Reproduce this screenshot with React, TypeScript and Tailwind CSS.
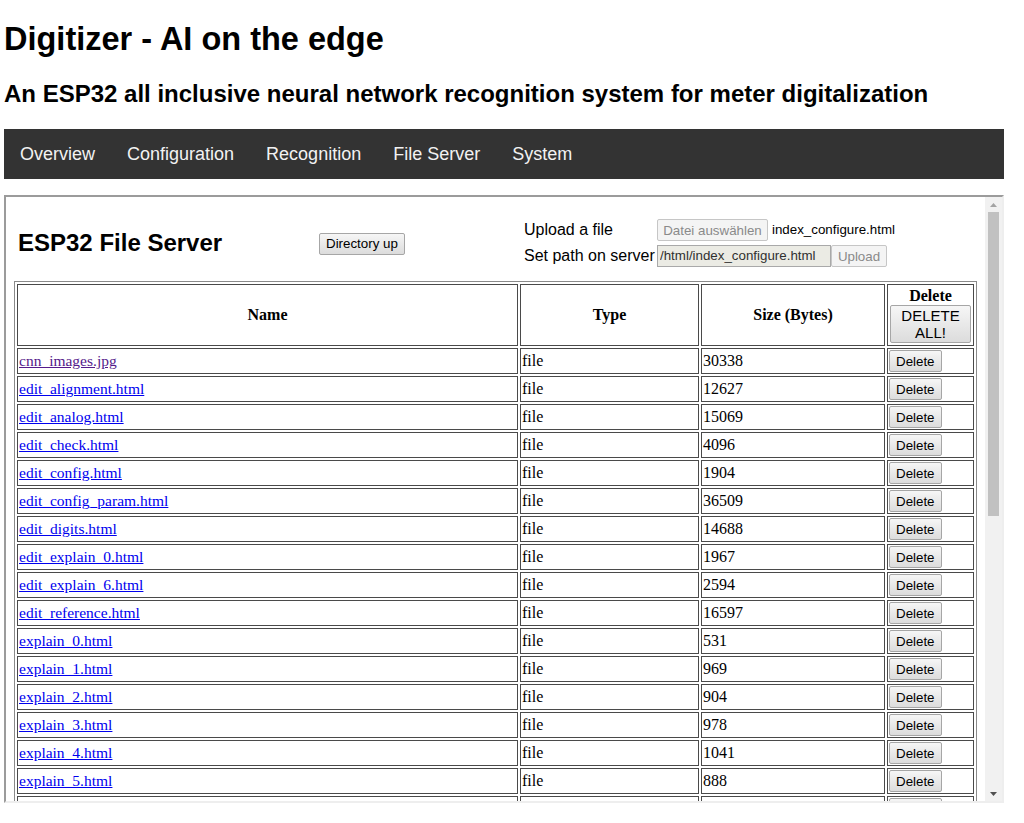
import React from 'react';

const files: [string, string, boolean?][] = [
  ['cnn_images.jpg', '30338', true],
  ['edit_alignment.html', '12627'],
  ['edit_analog.html', '15069'],
  ['edit_check.html', '4096'],
  ['edit_config.html', '1904'],
  ['edit_config_param.html', '36509'],
  ['edit_digits.html', '14688'],
  ['edit_explain_0.html', '1967'],
  ['edit_explain_6.html', '2594'],
  ['edit_reference.html', '16597'],
  ['explain_0.html', '531'],
  ['explain_1.html', '969'],
  ['explain_2.html', '904'],
  ['explain_3.html', '978'],
  ['explain_4.html', '1041'],
  ['explain_5.html', '888'],
  ['explain_6.html', '1120'],
];

const navItems = ['Overview', 'Configuration', 'Recognition', 'File Server', 'System'];

const btnBase =
  "rounded-[2px] border border-[#a6a6a6] bg-linear-to-b from-[#f6f6f6] to-[#dcdcdc] font-['Liberation_Sans',Arial,sans-serif] font-normal text-black";
const btn = `${btnBase} h-[22px] whitespace-nowrap px-[6px] text-[13.33px] leading-[15px]`;
const btnOff =
  "h-[22px] whitespace-nowrap rounded-[2px] border border-[#c6c6c6] bg-[#f4f4f4] px-[4px] font-['Liberation_Sans',Arial,sans-serif] text-[13.33px] font-normal leading-[15px] text-[#8a8a8a]";
const cell = 'border border-[#4a4a4a] p-[1px] align-middle';

function Scrollbar() {
  return (
    <div className="flex w-[17px] shrink-0 flex-col bg-[#f1f1f1]">
      <div className="flex h-[15px] items-center justify-center">
        <svg width="7" height="4" viewBox="0 0 7 4">
          <polygon points="0,4 7,4 3.5,0" fill="#a3a3a3" />
        </svg>
      </div>
      <div className="mx-[3px] h-[304px] bg-[#c1c1c1]" />
      <div className="flex-1" />
      <div className="flex h-[15px] items-center justify-center">
        <svg width="7" height="4" viewBox="0 0 7 4">
          <polygon points="0,0 7,0 3.5,4" fill="#505050" />
        </svg>
      </div>
    </div>
  );
}

export default function App() {
  return (
    <div className="min-h-[823px] w-[1024px] bg-white font-['Liberation_Sans',Arial,sans-serif] text-black">
      <div className="px-[4px]">
        <h1 className="pt-[21px] text-[32.5px] font-bold leading-[37px]">Digitizer - AI on the edge</h1>
        <h2 className="mt-[22px] text-[24px] font-bold leading-[28px]">
          An ESP32 all inclusive neural network recognition system for meter digitalization
        </h2>

        <nav className="mt-[21px] flex h-[50px] w-[1000px] items-center bg-[#333333]">
          {navItems.map((item) => (
            <a key={item} className="px-[16px] text-[18px] leading-[22px] text-[#f2f2f2]">
              {item}
            </a>
          ))}
        </nav>

        <div className="mt-[16px] flex h-[608px] w-[1000px] overflow-hidden border-2 border-t-[#9b9b9b] border-r-[#eeeeee] border-b-[#eeeeee] border-l-[#9b9b9b]">
          <div className="flex-1 overflow-hidden px-[8px] pt-[8px]">
            <div className="flex h-[76px] items-center">
              <div className="w-[305px] pl-[4px] text-[24px] font-bold leading-[28px]">ESP32 File Server</div>
              <div className="w-[205px]">
                <button className={btn}>Directory up</button>
              </div>
              <div className="grid grid-cols-[133px_auto] items-center gap-y-[4px] text-[16px] leading-[22px]">
                <span>Upload a file</span>
                <div className="flex items-center">
                  <button disabled className={`${btnOff} w-[111px]`}>
                    Datei auswählen
                  </button>
                  <span className="ml-[4px] text-[13.33px]">index_configure.html</span>
                </div>
                <span>Set path on server</span>
                <div className="flex items-center">
                  <input
                    readOnly
                    value="/html/index_configure.html"
                    className="h-[22px] w-[174px] border border-[#a9a9a9] bg-[#ebebe4] px-[2px] text-[13.33px] text-[#303030] outline-none"
                  />
                  <button disabled className={`${btnOff} w-[56px]`}>
                    Upload
                  </button>
                </div>
              </div>
            </div>

            <table className="w-[963px] table-fixed border-separate border-spacing-[2px] border border-[#8a8a8a] font-['Liberation_Serif','Times_New_Roman',serif] text-[16px] leading-[18px]">
              <colgroup>
                <col className="w-[501px]" />
                <col className="w-[179px]" />
                <col className="w-[184px]" />
                <col className="w-[87px]" />
              </colgroup>
              <thead>
                <tr>
                  <th className={`${cell} h-[62px] text-center`}>Name</th>
                  <th className={`${cell} h-[62px] text-center`}>Type</th>
                  <th className={`${cell} h-[62px] text-center`}>Size (Bytes)</th>
                  <th className={`${cell} h-[62px] text-center`}>
                    <div>Delete</div>
                    <button className={`${btnBase} mx-auto block h-[38px] w-[81px] px-[4px] text-[15px] leading-[17px]`}>
                      DELETE
                      <br />
                      ALL!
                    </button>
                  </th>
                </tr>
              </thead>
              <tbody>
                {files.map(([name, size, visited]) => (
                  <tr key={name}>
                    <td className={`${cell} h-[26px]`}>
                      <a className={visited ? 'text-[15.5px] text-[#551a8b] underline' : 'text-[15.5px] text-[#0000ee] underline'}>
                        {name}
                      </a>
                    </td>
                    <td className={`${cell} h-[26px]`}>file</td>
                    <td className={`${cell} h-[26px]`}>{size}</td>
                    <td className={`${cell} h-[26px]`}>
                      <button className={btn}>Delete</button>
                    </td>
                  </tr>
                ))}
              </tbody>
            </table>
          </div>
          <Scrollbar />
        </div>
      </div>
    </div>
  );
}
